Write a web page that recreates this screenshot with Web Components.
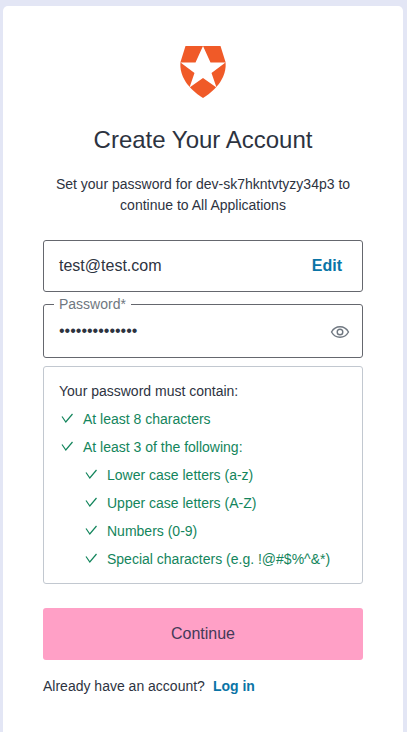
<!DOCTYPE html>
<html>
<head>
<meta charset="utf-8">
<style>
  html, body { margin: 0; height: 100%; }
  body { background: #e3e6f5; font-family: "Liberation Sans", Arial, sans-serif; color: #2d333f; overflow: hidden; }
</style>
</head>
<body>
<signup-card>
  <auth-logo slot="logo"></auth-logo>
  <span slot="title">Create Your Account</span>
  <span slot="intro">Set your password for dev-sk7hkntvtyzy34p3 to continue to All Applications</span>
  <email-field value="test@test.com"></email-field>
  <password-field label="Password*" dots="••••••••••••••"></password-field>
  <password-rules heading="Your password must contain:">
    <rule-item>At least 8 characters</rule-item>
    <rule-item>At least 3 of the following:</rule-item>
    <rule-item nested>Lower case letters (a-z)</rule-item>
    <rule-item nested>Upper case letters (A-Z)</rule-item>
    <rule-item nested>Numbers (0-9)</rule-item>
    <rule-item nested>Special characters (e.g. !@#$%^&amp;*)</rule-item>
  </password-rules>
  <continue-button>Continue</continue-button>
  <span slot="footer">Already have an account?</span>
  <a slot="link" href="#" style="color:#0a74a6;font-weight:700;text-decoration:none">Log in</a>
</signup-card>

<script>
class SignupCard extends HTMLElement {
  constructor() {
    super();
    this.attachShadow({ mode: 'open' });
    this.shadowRoot.innerHTML = `
    <style>
      :host { display: block; box-sizing: border-box; width: 400px; height: 740px; margin: 6px 0 0 3px;
              background: #fff; border-radius: 5px; padding: 40px 40px 0; }
      header { display: flex; flex-direction: column; align-items: center; text-align: center; }
      h1 { font-size: 24px; font-weight: 400; line-height: 30px; margin: 27px 0 0; color: #2d333f; }
      p { font-size: 14px; line-height: 21px; margin: 19px 0 0; width: 300px; color: #2d333f; }
      main { display: flex; flex-direction: column; margin-top: 24px; }
      footer { font-size: 14px; line-height: 20px; margin-top: 16px; color: #2d333f; display: flex; gap: 8px; }
    </style>
    <header>
      <slot name="logo"></slot>
      <h1><slot name="title"></slot></h1>
      <p><slot name="intro"></slot></p>
    </header>
    <main><slot></slot></main>
    <footer><slot name="footer"></slot><slot name="link"></slot></footer>`;
  }
}
customElements.define('signup-card', SignupCard);

class AuthLogo extends HTMLElement {
  constructor() {
    super();
    this.attachShadow({ mode: 'open' });
    this.shadowRoot.innerHTML = `
    <style>:host { display: block; width: 48px; height: 52px; } svg { display: block; }</style>
    <svg width="48" height="52" viewBox="0 0 48 52">
      <path fill="#f05a28" d="M6.500 0H41.500L46.500 16C48 30 38.500 43 24 52C9.500 43 0 30 1.500 16Z"/>
      <path fill="#fff" d="M24 0L31.500 16.500H46.500L32.500 27L37.500 41.500L24 32L10.500 41.500L15.500 27L1.500 16.500H16.500Z"/>
    </svg>`;
  }
}
customElements.define('auth-logo', AuthLogo);

class EmailField extends HTMLElement {
  constructor() {
    super();
    this.attachShadow({ mode: 'open' });
    this.shadowRoot.innerHTML = `
    <style>
      :host { display: flex; box-sizing: border-box; height: 52px; align-items: center; justify-content: space-between;
              border: 1px solid #65676e; border-radius: 3px; padding: 0 20px 0 15px; font-size: 16px; color: #2d333f; }
      b { color: #0a74a6; font-weight: 700; }
    </style>
    <span></span><b>Edit</b>`;
  }
  connectedCallback() {
    this.shadowRoot.querySelector('span').textContent = this.getAttribute('value');
  }
}
customElements.define('email-field', EmailField);

class PasswordField extends HTMLElement {
  constructor() {
    super();
    this.attachShadow({ mode: 'open' });
    this.shadowRoot.innerHTML = `
    <style>
      :host { display: flex; position: relative; box-sizing: border-box; height: 54px; margin-top: 12px; align-items: center;
              justify-content: space-between; border: 1px solid #65676e; border-radius: 3px; padding: 0 12px 0 15px; }
      label { position: absolute; left: 10px; top: -9px; background: #fff; padding: 0 5px; font-size: 14px; line-height: 16px; color: #6f7780; }
      .dots { font-size: 16px; letter-spacing: 0; color: #2d333f; }
      svg { display: block; position: relative; top: 1px; }
    </style>
    <label></label>
    <span class="dots"></span>
    <svg width="20" height="20" viewBox="0 0 20 20" fill="none" stroke="#6f7780" stroke-width="1.400">
      <path d="M1.500 10C3.500 6.500 6.500 4.800 10 4.800S16.500 6.500 18.500 10C16.500 13.500 13.500 15.200 10 15.200S3.500 13.500 1.500 10Z"/>
      <circle cx="10" cy="10" r="2.800"/>
    </svg>`;
  }
  connectedCallback() {
    this.shadowRoot.querySelector('label').textContent = this.getAttribute('label');
    this.shadowRoot.querySelector('.dots').textContent = this.getAttribute('dots');
  }
}
customElements.define('password-field', PasswordField);

class PasswordRules extends HTMLElement {
  constructor() {
    super();
    this.attachShadow({ mode: 'open' });
    this.shadowRoot.innerHTML = `
    <style>
      :host { display: block; box-sizing: border-box; height: 218px; margin-top: 8px; border: 1px solid #c2c8d0;
              border-radius: 3px; padding: 14px 15px 0; font-size: 14px; color: #2d333f; }
      div { line-height: 21px; margin-bottom: 3px; }
    </style>
    <div></div>
    <slot></slot>`;
  }
  connectedCallback() {
    this.shadowRoot.querySelector('div').textContent = this.getAttribute('heading');
  }
}
customElements.define('password-rules', PasswordRules);

class RuleItem extends HTMLElement {
  constructor() {
    super();
    this.attachShadow({ mode: 'open' });
    this.shadowRoot.innerHTML = `
    <style>
      :host { display: flex; align-items: center; gap: 9px; height: 28px; padding-left: 1px; font-size: 14px; color: #13855c; }
      :host([nested]) { padding-left: 25px; }
      svg { display: block; flex: none; position: relative; top: -1px; }
    </style>
    <svg width="14" height="14" viewBox="0 0 14 14" fill="none" stroke="#13855c" stroke-width="1.200">
      <path d="M2 5.500L5.800 11L12.500 3"/>
    </svg>
    <span><slot></slot></span>`;
  }
}
customElements.define('rule-item', RuleItem);

class ContinueButton extends HTMLElement {
  constructor() {
    super();
    this.attachShadow({ mode: 'open' });
    this.shadowRoot.innerHTML = `
    <style>
      :host { display: flex; align-items: center; justify-content: center; height: 52px; margin-top: 24px;
              background: #ffa0c6; border-radius: 3px; font-size: 16px; color: #443a58; }
    </style>
    <slot></slot>`;
  }
}
customElements.define('continue-button', ContinueButton);
</script>
</body>
</html>
